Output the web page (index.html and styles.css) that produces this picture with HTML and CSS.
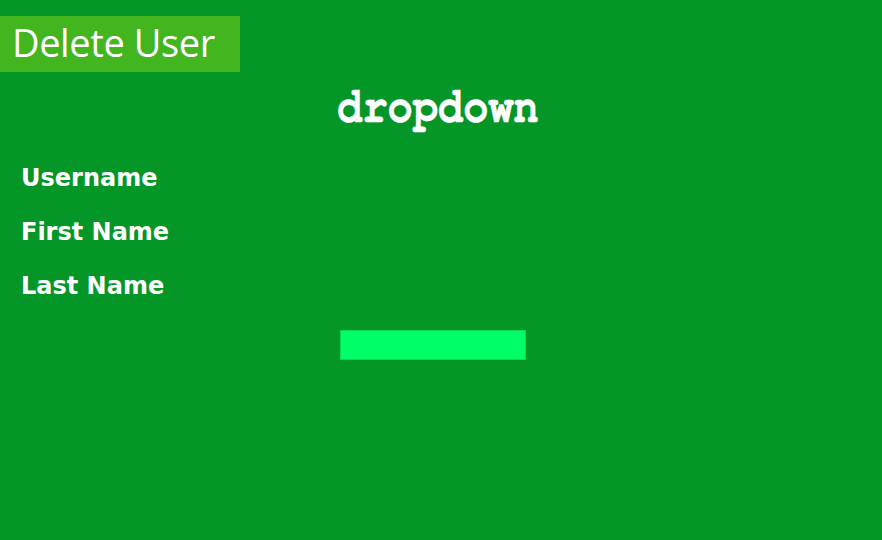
FILE: index.html
```html
<!DOCTYPE html>
<html>
<head>
<meta charset="utf-8">
<link rel="stylesheet" href="styles.css">
</head>
<body>
<div class="page">
  <h1 class="title">Delete User</h1>
  <div class="dropdown"><span class="dropdown-text">dropdown</span></div>
  <div class="fields">
    <div class="field f1">Username</div>
    <div class="field f2">First Name</div>
    <div class="field f3">Last Name</div>
  </div>
  <div class="actions"><button class="btn"></button></div>
</div>
</body>
</html>
```
FILE: styles.css
```css
html, body {
  margin: 0;
  padding: 0;
  background: #059628;
  width: 882px;
  height: 540px;
  overflow: hidden;
}
.page {
  display: flex;
  flex-direction: column;
  padding-top: 16px;
}
.title {
  margin: 0;
  width: 240px;
  height: 56px;
  box-sizing: border-box;
  background: #42b51f;
  color: #fff;
  font-family: "Open Sans", sans-serif;
  font-weight: 400;
  font-size: 38px;
  line-height: 52px;
  padding-left: 12px;
  letter-spacing: -0.4px;
  white-space: nowrap;
}
.dropdown {
  font-family: "FreeMono", "Courier New", monospace;
  font-weight: bold;
  font-size: 42px;
  color: #fff;
  text-align: center;
  line-height: 48px;
  margin-top: 12px;
  padding-right: 6px;
}
.dropdown-text {
  display: inline-block;
  transform: scaleY(1.22);
  transform-origin: 50% 72%;
  -webkit-text-stroke: 0.5px #fff;
}
.fields {
  display: flex;
  flex-direction: column;
  padding-left: 21px;
  margin-top: 19px;
}
.field {
  font-family: "DejaVu Sans", sans-serif;
  font-weight: bold;
  font-size: 24px;
  color: #fff;
  line-height: 54px;
}
.actions {
  display: flex;
  justify-content: flex-start;
  padding-left: 340px;
  margin-top: 17px;
}
.btn {
  width: 186px;
  height: 30px;
  background: #00ff66;
  border: 1px solid #08d85a;
  padding: 0;
}
```
